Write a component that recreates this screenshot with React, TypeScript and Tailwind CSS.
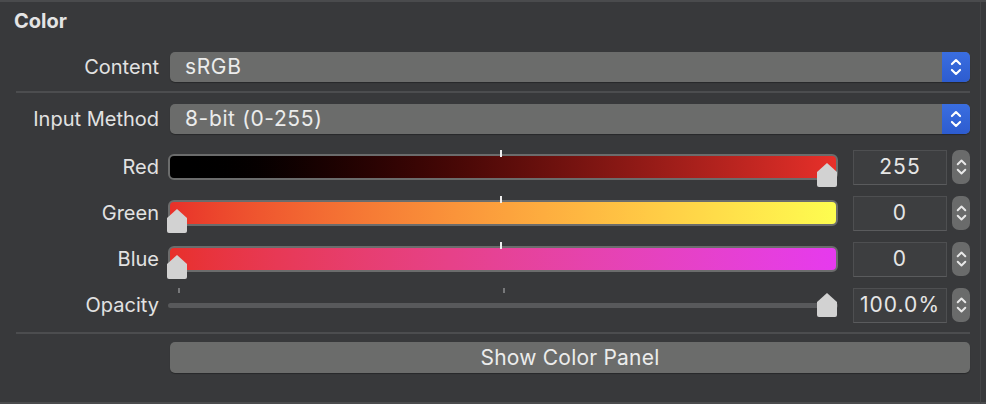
import React from 'react';

const font = { fontFamily: 'Inter, "Liberation Sans", sans-serif' };

const UpDown = ({ className = '' }: { className?: string }) => (
  <svg viewBox="0 0 12 20" className={className} fill="none" stroke="currentColor" strokeWidth="1.8" strokeLinecap="round" strokeLinejoin="round">
    <path d="M2.5 7.5 L6 4 L9.5 7.5" />
    <path d="M2.5 12.5 L6 16 L9.5 12.5" />
  </svg>
);

const Thumb = () => (
  <svg viewBox="0 0 22 26" className="h-[26px] w-[22px]">
    <path d="M11 1 L21 10 L21 23 Q21 25 19 25 L3 25 Q1 25 1 23 L1 10 Z" fill="#d2d2d2" />
  </svg>
);

const Label = ({ children }: { children: React.ReactNode }) => (
  <div className="w-[159px] text-right text-[20px] leading-none text-[#e2e2e2]">{children}</div>
);

const Select = ({ label, value }: { label: string; value: string }) => (
  <div className="flex h-[30px] items-center">
    <Label>{label}</Label>
    <div className="ml-[11px] flex h-full flex-1 items-stretch overflow-hidden rounded-[5px] bg-[#6b6c6b] shadow-[0_1px_1px_rgba(0,0,0,0.3)]">
      <div className="flex flex-1 items-center pl-[15px] text-[21px] tracking-[0.03em] text-[#ececec]">{value}</div>
      <div className="flex w-[28px] items-center justify-center bg-gradient-to-b from-[#3a6ee0] to-[#2d5ccf] text-white">
        <UpDown className="h-[24px] w-[14px]" />
      </div>
    </div>
  </div>
);

const Field = ({ value }: { value: string }) => (
  <>
    <div className="ml-[15px] flex h-[35px] w-[94px] items-center justify-center border border-[#4e4f51] border-b-[#5a5b5d] bg-[#3d3e40] text-[21px] tracking-[0.05em] text-[#e6e6e6]">
      {value}
    </div>
    <div className="ml-[5px] flex h-[34px] w-[18px] items-center justify-center rounded-[7px] bg-[#6a6b6b] text-[#e8e8e8]">
      <UpDown className="h-[26px] w-[13px]" />
    </div>
  </>
);

const ColorSlider = ({ label, gradient, value, thumbRight }: { label: string; gradient: string; value: string; thumbRight?: boolean }) => (
  <div className="flex h-[46px] items-center">
    <Label>{label}</Label>
    <div className="relative ml-[9px] h-[26px] flex-1">
      <div className={`h-full rounded-[6px] border-2 border-[#6b6c6c] ${gradient}`} />
      <div className="absolute left-[332px] top-[-4px] h-[7px] w-[2px] bg-[#eeeeee]" />
      <div className={`absolute top-[8px] ${thumbRight ? 'right-0' : 'left-[-2px]'}`}>
        <Thumb />
      </div>
    </div>
    <Field value={value} />
  </div>
);

export default function App() {
  return (
    <div style={font} className="relative h-[404px] w-[986px] overflow-hidden border-t-2 border-[#4a4b4d] bg-[#38393b]">
      <div className="px-[14px] pt-[6px] text-[20px] font-bold leading-[26px] text-[#e4e4e4]">Color</div>
      <div className="pr-[16px] pt-[18px]">
        <Select label="Content" value="sRGB" />
        <div className="ml-[16px] mt-[9px] h-[2px] bg-[#4c4d4f]" />
        <div className="mt-[11px]">
          <Select label="Input Method" value="8-bit (0-255)" />
        </div>
        <div className="mt-[10px]">
          <ColorSlider label="Red" gradient="bg-gradient-to-r from-black to-[#e8302a]" value="255" thumbRight />
          <ColorSlider label="Green" gradient="bg-gradient-to-r from-[#e8302a] to-[#fdfd50]" value="0" />
          <ColorSlider label="Blue" gradient="bg-gradient-to-r from-[#e8302a] to-[#e63aee]" value="0" />
          <div className="flex h-[46px] items-center">
            <Label>Opacity</Label>
            <div className="relative ml-[9px] h-[26px] flex-1">
              <div className="absolute left-0 right-0 top-[11px] h-[5px] rounded-full bg-[#58595b]" />
              <div className="absolute left-[10px] top-[-4px] h-[5px] w-[2px] bg-[#77787a]" />
              <div className="absolute left-[335px] top-[-4px] h-[5px] w-[2px] bg-[#77787a]" />
              <div className="absolute right-0 top-[0px]">
                <Thumb />
              </div>
            </div>
            <Field value="100.0%" />
          </div>
        </div>
        <div className="ml-[16px] mt-[4px] h-[2px] bg-[#4c4d4f]" />
        <div className="ml-[170px] mt-[8px] flex h-[31px] items-center justify-center rounded-[5px] bg-[#6b6c6b] text-[21px] tracking-[0.01em] text-[#ececec] shadow-[0_1px_1px_rgba(0,0,0,0.3)]">
          Show Color Panel
        </div>
      </div>
      <div className="absolute bottom-0 left-0 right-0 h-[2px] bg-[#4a4b4d]" />
      <div className="absolute bottom-0 right-[5px] top-0 w-px bg-[#444547]" />
    </div>
  );
}
